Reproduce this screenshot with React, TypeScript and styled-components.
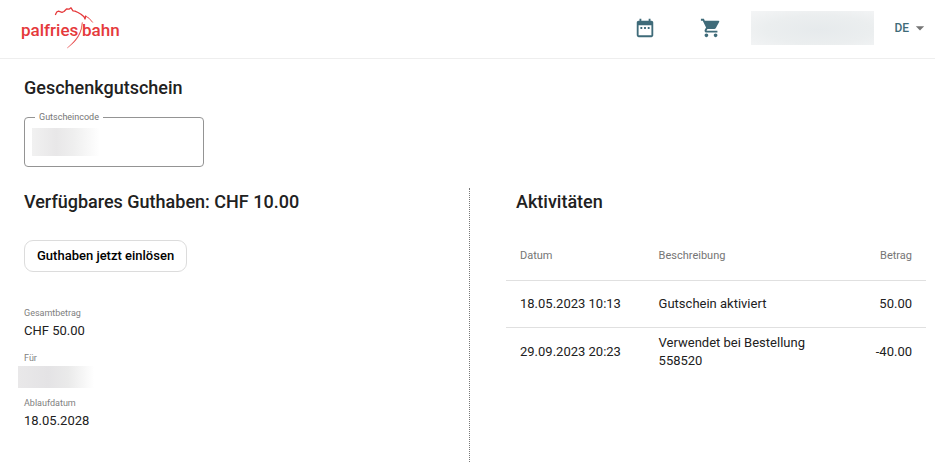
import React from 'react';
import styled, { createGlobalStyle } from 'styled-components';
import { MdArrowDropDown, MdDateRange, MdShoppingCart } from 'react-icons/md';

const GlobalStyle = createGlobalStyle`
  *, *::before, *::after { box-sizing: border-box; }
  body {
    margin: 0;
    background: #fff;
    color: #212121;
    font: 400 13px/18px Roboto, 'Liberation Sans', sans-serif;
  }
  button, input { font: inherit; color: inherit; }
`;

const Header = styled.header`
  display: flex;
  align-items: center;
  justify-content: space-between;
  height: 59px;
  padding: 0 5px 2px 21px;
  border-bottom: 1px solid #eee;
`;

const LogoLink = styled.a`
  display: block;
  line-height: 0;
`;

const LogoText = styled.text`
  font: 500 17px Roboto, 'Liberation Sans', sans-serif;
  fill: #e5393b;
`;

const Actions = styled.nav`
  display: flex;
  align-items: center;
`;

const IconButton = styled.button`
  display: flex;
  padding: 0;
  margin-right: 44px;
  border: 0;
  background: none;
  color: #3f6b79;
  font-size: 22px;
  cursor: pointer;

  & + & { margin-right: 29px; }
`;

const AccountButton = styled.button`
  width: 123px;
  height: 34px;
  padding: 0;
  border: 0;
  background: radial-gradient(ellipse at 55% 55%, #e6eaec 0%, #ebeeef 55%, #f4f5f6 100%);
`;

const LanguageButton = styled.button`
  display: flex;
  align-items: center;
  gap: 1px;
  margin-left: 20px;
  padding: 0;
  border: 0;
  background: none;
  color: #3f6b79;
  font-size: 12px;
  font-weight: 500;
  cursor: pointer;

  svg { color: #757575; font-size: 20px; }
`;

const Page = styled.main`
  padding: 16px 9px 12px 12px;
`;

const Title = styled.h2`
  margin: 0;
  font-size: 18px;
  font-weight: 500;
  line-height: 26px;
`;

const Voucher = styled.section`
  padding-left: 12px;
`;

const Field = styled.div`
  position: relative;
  width: 180px;
  height: 50px;
  margin-top: 16px;
  padding: 10px 7px;
  border: 1px solid #949494;
  border-radius: 4px;
`;

const FieldLabel = styled.label`
  position: absolute;
  top: -8px;
  left: 10px;
  padding: 0 4px;
  background: #fff;
  color: #757575;
  font-size: 9px;
  line-height: 14px;
`;

const FieldInput = styled.input`
  display: block;
  width: 100%;
  height: 28px;
  padding: 0;
  border: 0;
  outline: 0;
  background: linear-gradient(90deg, #f1f1f1, #e8e7e8 24px, #efefef 42px, #fff 68px);
`;

const Columns = styled.div`
  display: grid;
  grid-template-columns: 1fr 1fr;
  margin-top: 21px;
`;

const Balance = styled.section`
  padding: 1px 0 0 12px;
`;

const Activities = styled.section`
  min-height: 274px;
  padding: 1px 0 0 36px;
  border-left: 1px dotted #777;
`;

const ActivitiesTitle = styled(Title)`
  padding-left: 10px;
`;

const RedeemButton = styled.button`
  height: 32px;
  margin-top: 25px;
  padding: 0 12px;
  border: 1px solid #dcdcdc;
  border-radius: 9px;
  background: #fff;
  color: #000;
  font-weight: 500;
  cursor: pointer;
`;

const Details = styled.dl`
  display: grid;
  gap: 11px;
  margin: 34px 0 0;
`;

const Term = styled.dt`
  color: #808080;
  font-size: 9px;
  line-height: 14px;
`;

const Value = styled.dd`
  min-height: 18px;
  margin: 2px 0 0;
`;

const HiddenValue = styled(Value)`
  width: 76px;
  height: 22px;
  margin: 1px 0 -3px -6px;
  background: linear-gradient(90deg, #e9e8e9, #e4e3e5 30px, #eaeaea 50px, #fff);
`;

const Table = styled.table`
  width: 100%;
  margin-top: 15px;
  border-collapse: separate;
  border-spacing: 0;
  table-layout: fixed;
`;

const Cell = styled.td<{ $end?: boolean }>`
  height: 47px;
  padding: 0 14px;
  text-align: ${({ $end }) => ($end ? 'right' : 'left')};

  tr:not(:last-child) > & { border-bottom: 1px solid #e0e0e0; }
`;

const HeadCell = styled.th<{ $end?: boolean; $width: string }>`
  width: ${({ $width }) => $width};
  height: 51px;
  padding: 2px 14px 0;
  border-bottom: 1px solid #e0e0e0;
  color: #757575;
  font-size: 11px;
  font-weight: 400;
  text-align: ${({ $end }) => ($end ? 'right' : 'left')};
`;

const activities = [
  { date: '18.05.2023 10:13', text: 'Gutschein aktiviert', amount: '50.00' },
  { date: '29.09.2023 20:23', text: 'Verwendet bei Bestellung 558520', amount: '-40.00' },
];

function Logo() {
  return (
    <svg width="100" height="44" viewBox="0 0 100 44" role="img" aria-label="palfries bahn">
      <g fill="none" stroke="#e5393b" strokeLinecap="round" strokeLinejoin="round">
        <path d="M34.500 8.500Q35.500 5.500 37.500 5.200L41 6.300 43 5.500 45.500 3 48 3.200 50 1.800 52 4.800 54 5.200 57 6.500 60 8.200 63 10.800 64 13 64.700 10.200" strokeWidth="1.300" />
        <path d="M64.700 10.200L68 12.200 71.500 16.200" strokeWidth=".9" />
      </g>
      <path d="M61 16.500C60.500 26 56.500 33 46.200 42c9-6.200 14.800-14 15.200-25.500z" fill="#e5393b" stroke="#e5393b" strokeWidth=".3" />
      <LogoText x="0" y="30">palfries</LogoText>
      <LogoText x="61" y="30">bahn</LogoText>
    </svg>
  );
}

export default function App() {
  return (
    <>
      <GlobalStyle />
      <Header>
        <LogoLink href="#"><Logo /></LogoLink>
        <Actions>
          <IconButton aria-label="Kalender"><MdDateRange /></IconButton>
          <IconButton aria-label="Warenkorb"><MdShoppingCart /></IconButton>
          <AccountButton aria-label="Konto" />
          <LanguageButton>DE<MdArrowDropDown /></LanguageButton>
        </Actions>
      </Header>
      <Page>
        <Voucher>
          <Title>Geschenkgutschein</Title>
          <Field>
            <FieldLabel htmlFor="code">Gutscheincode</FieldLabel>
            <FieldInput id="code" type="text" />
          </Field>
        </Voucher>
        <Columns>
          <Balance>
            <Title>Verfügbares Guthaben: CHF 10.00</Title>
            <RedeemButton>Guthaben jetzt einlösen</RedeemButton>
            <Details>
              <div>
                <Term>Gesamtbetrag</Term>
                <Value>CHF 50.00</Value>
              </div>
              <div>
                <Term>Für</Term>
                <HiddenValue />
              </div>
              <div>
                <Term>Ablaufdatum</Term>
                <Value>18.05.2028</Value>
              </div>
            </Details>
          </Balance>
          <Activities>
            <ActivitiesTitle>Aktivitäten</ActivitiesTitle>
            <Table>
              <thead>
                <tr>
                  <HeadCell $width="33%">Datum</HeadCell>
                  <HeadCell $width="42%">Beschreibung</HeadCell>
                  <HeadCell $width="25%" $end>Betrag</HeadCell>
                </tr>
              </thead>
              <tbody>
                {activities.map((item) => (
                  <tr key={item.date}>
                    <Cell>{item.date}</Cell>
                    <Cell>{item.text}</Cell>
                    <Cell $end>{item.amount}</Cell>
                  </tr>
                ))}
              </tbody>
            </Table>
          </Activities>
        </Columns>
      </Page>
    </>
  );
}
